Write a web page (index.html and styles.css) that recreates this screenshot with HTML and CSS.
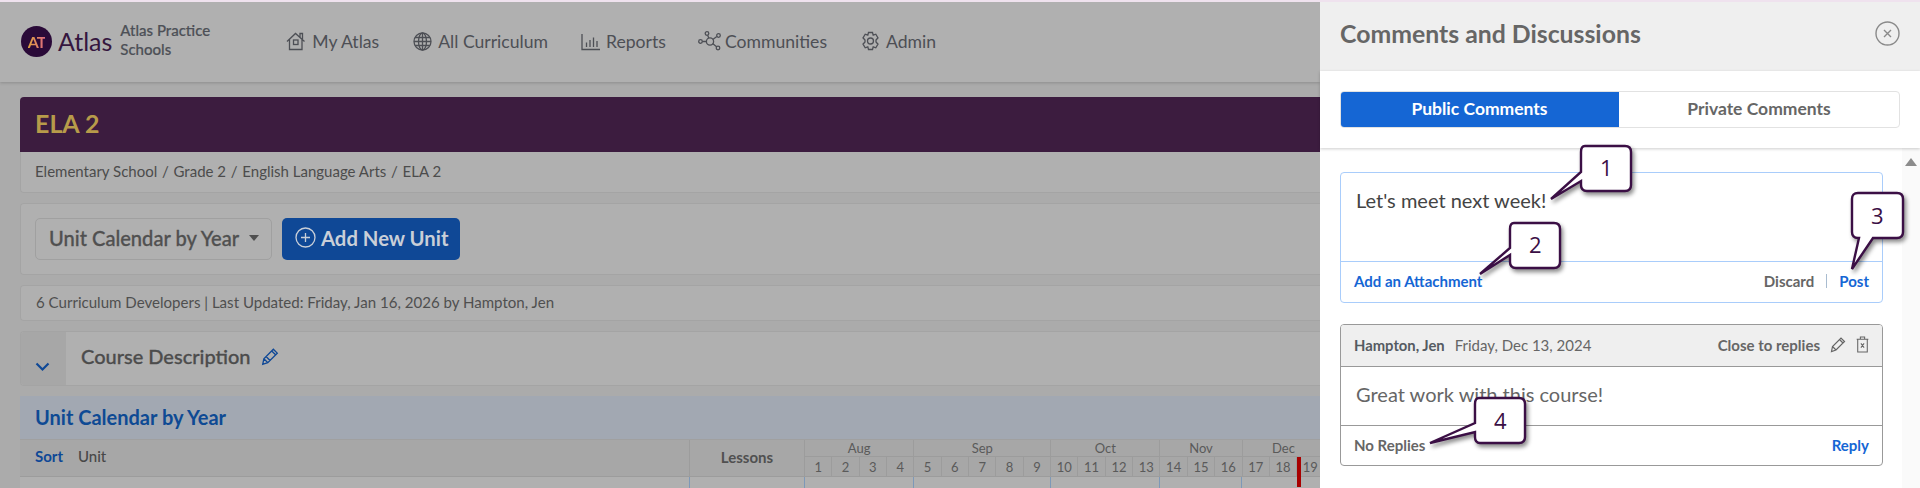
FILE: index.html
```html
<!DOCTYPE html>
<html lang="en">
<head>
<meta charset="utf-8">
<title>Atlas - Comments and Discussions</title>
<link rel="stylesheet" href="styles.css">
</head>
<body>
<div class="page">
  <div class="main">
    <header class="topbar">
      <div class="logo">
        <span class="logo-mark"><span class="logo-at">AT</span></span>
        <span class="logo-word">Atlas</span>
      </div>
      <div class="school">Atlas Practice<br>Schools</div>
      <nav class="nav">
        <a class="nav-item nav-home"><svg class="ico" width="20" height="22" viewBox="0 0 20 22"><path d="M1 11.5 9.5 3.5 18.5 11.5M3.5 9.5V19.5H16V9.5M14 7V3.5H16.5V9"/><rect x="7.5" y="10" width="4.5" height="4.5"/></svg>My Atlas</a>
        <a class="nav-item nav-all"><svg class="ico" width="19" height="19" viewBox="0 0 19 19"><circle cx="9.5" cy="9.5" r="8.5"/><ellipse cx="9.5" cy="9.5" rx="4" ry="8.5"/><path d="M1 9.5H18M2 5.5H17M2 13.5H17M9.5 1V18"/></svg>All Curriculum</a>
        <a class="nav-item nav-rep"><svg class="ico" width="19" height="19" viewBox="0 0 19 19"><path d="M1 2V17.5H19M5.5 10.5V15M9 8V15M12.5 5.5V15M16 9V15"/></svg>Reports</a>
        <a class="nav-item nav-com"><svg class="ico" width="23" height="20" viewBox="0 0 23 20"><circle cx="2.5" cy="10.5" r="1.8"/><circle cx="9" cy="2.5" r="1.8"/><circle cx="20.5" cy="4.5" r="1.8"/><circle cx="20" cy="17" r="1.8"/><circle cx="12" cy="10.5" r="3.6"/><path d="M4.3 10.5H8.4M9.6 4.2 10.8 7M18.8 5.4 14.8 8.4M18.6 15.8 14.6 12.6"/></svg>Communities</a>
        <a class="nav-item nav-adm"><svg class="ico" width="19" height="20" viewBox="0 0 19 20"><path d="M7.5 1.5H11.5L12.2 4.2 14.8 3.2 17 6.8 15 9 15 11 17 13.2 14.8 16.8 12.2 15.8 11.5 18.5H7.5L6.8 15.8 4.2 16.8 2 13.2 4 11 4 9 2 6.8 4.2 3.2 6.8 4.2Z"/><circle cx="9.5" cy="10" r="3"/></svg>Admin</a>
      </nav>
    </header>

    <div class="content">
      <div class="course-title">ELA 2</div>
      <div class="crumbs">Elementary School<span class="sep">/</span>Grade 2<span class="sep">/</span>English Language Arts<span class="sep">/</span>ELA 2</div>

      <div class="card toolbar">
        <div class="select">Unit Calendar by Year<span class="caret"></span></div>
        <div class="add-btn"><svg class="add-ico" width="21" height="21" viewBox="0 0 21 21"><circle cx="10.5" cy="10.5" r="9.5"/><path d="M10.5 6V15M6 10.5H15"/></svg>Add New Unit</div>
      </div>

      <div class="card meta">6 Curriculum Developers | Last Updated: Friday, Jan 16, 2026 by Hampton, Jen</div>

      <div class="card course">
        <div class="gutter"><svg class="chev" width="15" height="10" viewBox="0 0 15 10"><path d="M1.5 1.5 7.5 7.5 13.5 1.5"/></svg></div>
        <div class="course-name">Course Description</div>
        <svg class="pencil blue" width="18" height="19" viewBox="0 0 16 17"><path d="M1.5 15.5 2.5 10.5 11 2 14.5 5.5 6 14ZM2.5 10.5 6 14M9.5 3.5 13 7M4.5 8.5 8 12"/></svg>
      </div>

      <section class="calendar">
        <h2 class="cal-head">Unit Calendar by Year</h2>
        <div class="cal-grid">
          <div class="cal-unit"><span class="sort">Sort</span><span>Unit</span></div>
          <div class="cal-lessons">Lessons</div>
          <div class="month m4">Aug</div>
          <div class="month m5">Sep</div>
          <div class="month m4">Oct</div>
          <div class="month m3">Nov</div>
          <div class="month m3 dec">Dec</div>
          <div class="wk">1</div><div class="wk">2</div><div class="wk">3</div><div class="wk">4</div>
          <div class="wk">5</div><div class="wk">6</div><div class="wk">7</div><div class="wk">8</div><div class="wk">9</div>
          <div class="wk">10</div><div class="wk">11</div><div class="wk">12</div><div class="wk">13</div>
          <div class="wk">14</div><div class="wk">15</div><div class="wk">16</div>
          <div class="wk">17</div><div class="wk">18</div><div class="wk now">19</div>
        </div>
        <div class="cal-body">
          <div class="b-unit"></div><div class="b-les"></div><div class="b-m4"></div><div class="b-m5"></div><div class="b-m4"></div><div class="b-m3"></div><div class="b-m3"></div>
        </div>
      </section>
    </div>
  </div>

  <aside class="panel">
    <div class="panel-head">
      <h1 class="panel-title">Comments and Discussions</h1>
      <svg class="close" width="25" height="25" viewBox="0 0 25 25"><circle cx="12.5" cy="12.5" r="11.5"/><path d="M9 9 16 16M16 9 9 16"/></svg>
    </div>
    <div class="tabs-wrap">
      <div class="tabs">
        <div class="tab tab-on">Public Comments</div>
        <div class="tab">Private Comments</div>
      </div>
    </div>
    <div class="panel-body">
      <div class="thread">
        <div class="editor">
          <div class="editor-text">Let's meet next week!</div>
          <div class="editor-foot">
            <a class="link">Add an Attachment</a>
            <span class="foot-right"><span class="muted">Discard</span><span class="pipe"></span><a class="link">Post</a></span>
          </div>
        </div>
        <div class="comment">
          <div class="comment-head">
            <span class="author">Hampton, Jen</span>
            <span class="date">Friday, Dec 13, 2024</span>
            <span class="actions">
              <span class="muted">Close to replies</span>
              <svg class="pencil grey" width="16" height="17" viewBox="0 0 16 17"><path d="M1.5 15.5 2.5 10.5 11 2 14.5 5.5 6 14ZM2.5 10.5 6 14M9.5 3.5 13 7"/></svg>
              <svg class="trash" width="13" height="17" viewBox="0 0 12 16"><path d="M1.5 3V15H10.5V3M.5 3H11.5M4 3V1H8V3M4.5 7 7.5 11M7.5 7 4.5 11"/></svg>
            </span>
          </div>
          <div class="comment-text">Great work with this course!</div>
          <div class="comment-foot"><span class="muted">No Replies</span><a class="link">Reply</a></div>
        </div>
      </div>
      <div class="scroll"><span class="scroll-up"></span></div>
    </div>
  </aside>

  <div class="callout c1"><svg width="84" height="56" viewBox="0 0 84 56"><path d="M36 1H76Q82 1 82 7V40Q82 46 76 46H38Q32 46 32 40V36L2 54 32 27V7Q32 1 36 1Z"/></svg><span class="num n1">1</span></div>
  <div class="callout c2"><svg width="84" height="56" viewBox="0 0 84 56"><path d="M36 1H76Q82 1 82 7V40Q82 46 76 46H38Q32 46 32 40V33L2 52 32 26V7Q32 1 36 1Z"/></svg><span class="num n2">2</span></div>
  <div class="callout c3"><svg width="56" height="80" viewBox="0 0 56 80"><path d="M9 1H48Q54 1 54 7V40Q54 46 48 46H24L3 77 10 46H9Q3 46 3 40V7Q3 1 9 1Z"/></svg><span class="num n3">3</span></div>
  <div class="callout c4"><svg width="100" height="50" viewBox="0 0 100 50"><path d="M51 1H91Q97 1 97 7V40Q97 46 91 46H52Q47 46 47 40V35L2 46 47 26V7Q47 1 51 1Z"/></svg><span class="num n4">4</span></div>
</div>
</body>
</html>
```

FILE: styles.css
```css
* { box-sizing: border-box; }
html, body { margin: 0; height: 488px; overflow: hidden; }
body { font-family: Lato, "Liberation Sans", sans-serif; color: #505050; background: #ababab; }
.page { position: relative; display: flex; width: 1920px; height: 488px; border-top: 2px solid #efe2ee; }

.main { width: 1320px; flex: none; overflow: hidden; }
.topbar { display: flex; align-items: center; height: 80px; padding: 0 0 2px 21px; background: #b0b0b0; box-shadow: 0 1px 3px rgba(0,0,0,.18); position: relative; }
.logo { display: flex; align-items: center; gap: 6px; }
.logo-mark { display: flex; align-items: center; justify-content: center; width: 31px; height: 31px; border-radius: 50%; background: #2a0a38; }
.logo-at { font-size: 16px; font-weight: 700; letter-spacing: -1px; background: linear-gradient(90deg, #e0a440, #dd6a80); -webkit-background-clip: text; background-clip: text; color: transparent; }
.logo-word { font-size: 25px; color: #35163f; line-height: 1; }
.school { margin: -3px 0 0 8px; width: 120px; font-size: 15px; font-weight: 500; line-height: 19px; color: #4d5057; -webkit-text-stroke: .2px #4d5057; }
.nav { display: flex; align-items: center; margin-left: 46px; font-size: 17.6px; color: #4d4f55; }
.nav-item { display: flex; align-items: center; white-space: nowrap; }
.nav-home .ico { margin-right: 6px; }
.nav-all { margin-left: 34px; }
.nav-all .ico { margin-right: 6px; }
.nav-rep { margin-left: 33px; }
.nav-rep .ico { margin-right: 6px; }
.nav-com { margin-left: 32px; }
.nav-com .ico { margin-right: 4px; }
.nav-adm { margin-left: 34px; }
.nav-adm .ico { margin-right: 6px; }
.ico { fill: none; stroke: #4d4f55; stroke-width: 1.3; flex: none; }

.content { display: flex; flex-direction: column; padding: 15px 0 0 20px; }
.course-title { height: 55px; padding: 0 0 3px 15px; display: flex; align-items: center; background: #3c1c3f; color: #b79b4a; font-size: 25px; font-weight: 700; border-radius: 4px 0 0 0; }
.crumbs { height: 41px; padding: 0 0 3px 14px; display: flex; align-items: center; background: #b0b0b0; font-size: 15px; color: #4c4c4c; border: 1px solid #a4a4a4; border-top: 0; border-right: 0; border-radius: 0 0 0 4px; white-space: pre; }
.sep { margin: 0 4.75px; }
.card { background: #b0b0b0; border: 1px solid #a4a4a4; border-right: 0; border-radius: 4px 0 0 4px; margin-top: 10px; }
.toolbar { display: flex; align-items: center; gap: 10px; height: 72px; padding: 0 0 1px 14px; }
.select { display: flex; align-items: center; width: 237px; height: 42px; padding: 0 0 2px 13px; border: 1px solid #a0a0a0; border-radius: 5px; font-size: 20.1px; font-weight: 500; color: #505050; -webkit-text-stroke: .3px #505050; }
.caret { margin-left: 10px; border: 5px solid transparent; border-top: 6px solid #4f4f4f; border-bottom: 0; }
.add-btn { display: flex; align-items: center; gap: 5px; width: 178px; height: 42px; padding: 0 0 2px 13px; background: #0f4896; border-radius: 5px; color: #c9cfd8; font-size: 20.3px; font-weight: 700; white-space: nowrap; }
.add-ico { fill: none; stroke: #c9cfd8; stroke-width: 1.3; }
.meta { height: 36px; display: flex; align-items: center; padding: 0 0 2px 15px; font-size: 15.07px; color: #4f4f4f; }
.course { display: flex; align-items: flex-start; height: 55px; overflow: hidden; }
.gutter { width: 45px; height: 100%; background: #a7a7a7; display: flex; align-items: flex-end; padding: 0 0 13px 14px; }
.chev { fill: none; stroke: #0f4896; stroke-width: 2.2; }
.course-name { margin: 11px 0 0 15px; font-size: 20px; font-weight: 500; color: #4c4c4c; line-height: 27px; -webkit-text-stroke: .3px #4c4c4c; }
.pencil { fill: none; stroke-width: 1.2; }
.pencil.blue { margin: 15px 0 0 10px; stroke: #0f4896; }
.pencil.grey { stroke: #666; }

.calendar { margin-top: 10px; }
.cal-head { margin: 0; height: 44px; padding: 0 0 2px 15px; display: flex; align-items: center; background: #a2a8b2; color: #0e4a94; font-size: 20px; font-weight: 700; border-bottom: 1px solid #a0a0a0; }
.cal-grid { display: grid; grid-template-columns: 670px 115px repeat(19, 27.35px); grid-template-rows: 17px 19px; background: #a7a7a7; color: #5a5a5a; border-bottom: 1px solid #9c9c9c; }
.cal-unit { grid-row: 1 / 3; display: flex; align-items: center; gap: 15px; padding: 0 0 4px 15px; font-size: 15px; font-weight: 500; color: #484848; border-right: 1px solid #9c9c9c; }
.sort { color: #0f4896; font-weight: 700; }
.cal-lessons { grid-row: 1 / 3; display: flex; align-items: center; justify-content: center; padding-bottom: 2px; font-size: 15px; font-weight: 700; color: #505050; border-right: 1px solid #9c9c9c; }
.month { display: flex; align-items: center; justify-content: center; font-size: 13px; border-right: 1px solid #9c9c9c; border-bottom: 1px solid #9c9c9c; }
.m3 { grid-column: span 3; }
.m4 { grid-column: span 4; }
.m5 { grid-column: span 5; }
.dec { border-right: 0; }
.wk { display: flex; align-items: center; justify-content: center; font-size: 13px; border-right: 1px solid #9c9c9c; position: relative; }
.now::before { content: ""; position: absolute; left: 0; top: 0; width: 4px; height: 30px; background: #a80000; }
.cal-body { display: grid; grid-template-columns: 670px 114.5px 109.4px 136.75px 109.4px 82px 82px; height: 11px; background: #b0b0b0; }
.cal-body div { border-right: 1px solid #7d98b8; }

.panel { width: 600px; flex: none; display: flex; flex-direction: column; background: #fff; position: relative; }
.panel-head { display: flex; align-items: center; justify-content: space-between; height: 69px; padding: 0 20px 6px; background: #efefef; }
.panel-title { margin: -1px 0 0; font-size: 24.8px; font-weight: 700; color: #666; }
.close { fill: none; stroke: #8a8a8a; stroke-width: 1.4; }
.tabs-wrap { height: 77px; padding: 20px 20px 0; box-shadow: 0 1px 3px rgba(0,0,0,.2); position: relative; }
.tabs { display: flex; height: 37px; border: 1px solid #e2e2e2; border-radius: 4px; overflow: hidden; }
.tab { flex: 1; display: flex; align-items: center; justify-content: center; padding-bottom: 2px; font-size: 17.5px; font-weight: 700; color: #666; }
.tab-on { flex: none; width: 279px; margin: -1px 0 -1px -1px; background: #1566d4; color: #fff; }
.panel-body { flex: 1; display: flex; min-height: 0; }
.thread { width: 582px; flex: none; padding: 24px 19px 0 20px; }
.scroll { flex: 1; background: #fafafa; display: flex; justify-content: center; padding-top: 10px; }
.scroll-up { width: 0; height: 0; border: 6.5px solid transparent; border-top: 0; border-bottom: 8px solid #8c8c8c; }
.editor { height: 131px; border: 1px solid #a9cdfb; border-radius: 4px; display: flex; flex-direction: column; }
.editor-text { height: 89px; padding: 15px 15px 0; font-size: 20px; line-height: 24px; color: #444; border-bottom: 1px solid #a9cdfb; }
.editor-foot { flex: 1; display: flex; align-items: center; justify-content: space-between; padding: 0 13px 2px; font-size: 15px; font-weight: 700; }
.link { color: #1566d4; font-weight: 700; }
.muted { color: #666; font-weight: 700; font-size: 15px; }
.foot-right { display: flex; align-items: center; }
.pipe { width: 1px; height: 14px; margin: 0 12px; background: #a9bcd0; }
.comment { margin-top: 21px; height: 142px; border: 1px solid #999; border-radius: 4px; overflow: hidden; display: flex; flex-direction: column; }
.comment-head { height: 42px; flex: none; display: flex; align-items: center; padding: 0 13px 2px; background: #efefef; border-bottom: 1px solid #999; font-size: 15px; }
.author { font-weight: 700; font-size: 14.8px; color: #555b62; }
.date { margin-left: 10px; color: #666; }
.actions { margin-left: auto; display: flex; align-items: center; gap: 10px; }
.trash { fill: none; stroke: #666; stroke-width: 1; }
.comment-text { height: 59px; flex: none; padding-top: 15px; padding-left: 15px; font-size: 20px; line-height: 24px; color: #666; border-bottom: 1px solid #999; }
.comment-foot { flex: 1; display: flex; align-items: center; justify-content: space-between; padding: 0 13px 2px; font-size: 15px; }

.callout { position: absolute; }
.callout svg { display: block; overflow: visible; fill: #fff; stroke: #3b0f45; stroke-width: 2.4; filter: drop-shadow(2px 3px 2px rgba(0,0,0,.45)); }
.c1 { left: 1549px; top: 143px; }
.c2 { left: 1478px; top: 220px; }
.c3 { left: 1849px; top: 190px; }
.c4 { left: 1428px; top: 395px; }
.num { position: absolute; font-family: "Open Sans", Lato, sans-serif; font-size: 22px; line-height: 24px; color: #3b0f45; }
.n1 { left: 51px; top: 10px; }
.n2 { left: 51px; top: 10px; }
.n3 { left: 22px; top: 11px; }
.n4 { left: 66px; top: 11px; }
```
